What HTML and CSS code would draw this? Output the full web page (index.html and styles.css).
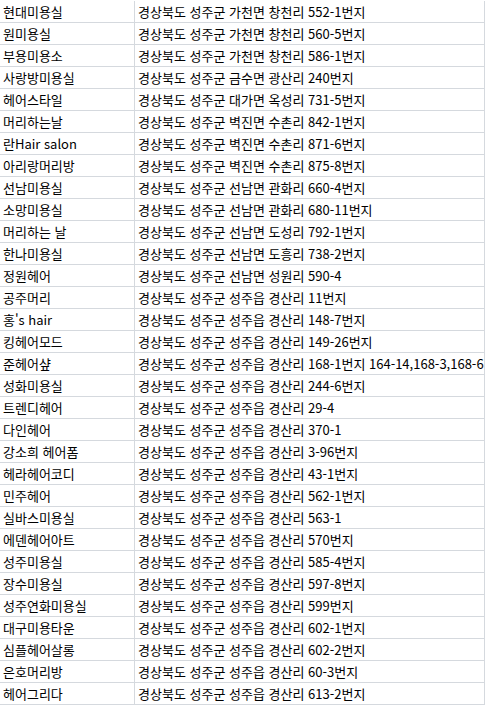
FILE: index.html
```html
<!DOCTYPE html>
<html lang="ko">
<head>
<meta charset="utf-8">
<title>미용실 목록</title>
<link rel="stylesheet" href="styles.css">
</head>
<body>
<div class="sheet">
  <div class="row"><div class="cell name">현대미용실</div><div class="cell addr">경상북도 성주군 가천면 창천리 552-1번지</div></div>
  <div class="row"><div class="cell name">원미용실</div><div class="cell addr">경상북도 성주군 가천면 창천리 560-5번지</div></div>
  <div class="row"><div class="cell name">부용미용소</div><div class="cell addr">경상북도 성주군 가천면 창천리 586-1번지</div></div>
  <div class="row"><div class="cell name">사랑방미용실</div><div class="cell addr">경상북도 성주군 금수면 광산리 240번지</div></div>
  <div class="row"><div class="cell name">헤어스타일</div><div class="cell addr">경상북도 성주군 대가면 옥성리 731-5번지</div></div>
  <div class="row"><div class="cell name">머리하는날</div><div class="cell addr">경상북도 성주군 벽진면 수촌리 842-1번지</div></div>
  <div class="row"><div class="cell name">란Hair salon</div><div class="cell addr">경상북도 성주군 벽진면 수촌리 871-6번지</div></div>
  <div class="row"><div class="cell name">아리랑머리방</div><div class="cell addr">경상북도 성주군 벽진면 수촌리 875-8번지</div></div>
  <div class="row"><div class="cell name">선남미용실</div><div class="cell addr">경상북도 성주군 선남면 관화리 660-4번지</div></div>
  <div class="row"><div class="cell name">소망미용실</div><div class="cell addr">경상북도 성주군 선남면 관화리 680-11번지</div></div>
  <div class="row"><div class="cell name">머리하는 날</div><div class="cell addr">경상북도 성주군 선남면 도성리 792-1번지</div></div>
  <div class="row"><div class="cell name">한나미용실</div><div class="cell addr">경상북도 성주군 선남면 도흥리 738-2번지</div></div>
  <div class="row"><div class="cell name">정원헤어</div><div class="cell addr">경상북도 성주군 선남면 성원리 590-4</div></div>
  <div class="row"><div class="cell name">공주머리</div><div class="cell addr">경상북도 성주군 성주읍 경산리 11번지</div></div>
  <div class="row"><div class="cell name">홍's hair</div><div class="cell addr">경상북도 성주군 성주읍 경산리 148-7번지</div></div>
  <div class="row"><div class="cell name">킹헤어모드</div><div class="cell addr">경상북도 성주군 성주읍 경산리 149-26번지</div></div>
  <div class="row"><div class="cell name">준헤어샾</div><div class="cell addr">경상북도 성주군 성주읍 경산리 168-1번지 164-14,168-3,168-6</div></div>
  <div class="row"><div class="cell name">성화미용실</div><div class="cell addr">경상북도 성주군 성주읍 경산리 244-6번지</div></div>
  <div class="row"><div class="cell name">트렌디헤어</div><div class="cell addr">경상북도 성주군 성주읍 경산리 29-4</div></div>
  <div class="row"><div class="cell name">다인헤어</div><div class="cell addr">경상북도 성주군 성주읍 경산리 370-1</div></div>
  <div class="row"><div class="cell name">강소희 헤어폼</div><div class="cell addr">경상북도 성주군 성주읍 경산리 3-96번지</div></div>
  <div class="row"><div class="cell name">헤라헤어코디</div><div class="cell addr">경상북도 성주군 성주읍 경산리 43-1번지</div></div>
  <div class="row"><div class="cell name">민주헤어</div><div class="cell addr">경상북도 성주군 성주읍 경산리 562-1번지</div></div>
  <div class="row"><div class="cell name">실바스미용실</div><div class="cell addr">경상북도 성주군 성주읍 경산리 563-1</div></div>
  <div class="row"><div class="cell name">에덴헤어아트</div><div class="cell addr">경상북도 성주군 성주읍 경산리 570번지</div></div>
  <div class="row"><div class="cell name">성주미용실</div><div class="cell addr">경상북도 성주군 성주읍 경산리 585-4번지</div></div>
  <div class="row"><div class="cell name">장수미용실</div><div class="cell addr">경상북도 성주군 성주읍 경산리 597-8번지</div></div>
  <div class="row"><div class="cell name">성주연화미용실</div><div class="cell addr">경상북도 성주군 성주읍 경산리 599번지</div></div>
  <div class="row"><div class="cell name">대구미용타운</div><div class="cell addr">경상북도 성주군 성주읍 경산리 602-1번지</div></div>
  <div class="row"><div class="cell name">심플헤어살롱</div><div class="cell addr">경상북도 성주군 성주읍 경산리 602-2번지</div></div>
  <div class="row"><div class="cell name">은호머리방</div><div class="cell addr">경상북도 성주군 성주읍 경산리 60-3번지</div></div>
  <div class="row"><div class="cell name">헤어그리다</div><div class="cell addr">경상북도 성주군 성주읍 경산리 613-2번지</div></div>
</div>
</body>
</html>
```

FILE: styles.css
```css
html, body {
  margin: 0;
  padding: 0;
  background: #ffffff;
}

body {
  font-family: "Noto Sans CJK KR", "Noto Sans", sans-serif;
  font-size: 13px;
  color: #000000;
}

.sheet {
  padding-top: 1px;
  width: 485px;
}

.row {
  display: grid;
  grid-template-columns: 135px 350px;
  height: 22px;
}

.cell {
  box-sizing: border-box;
  height: 22px;
  border-right: 1px solid #d5d9de;
  border-bottom: 1px solid #d5d9de;
  padding: 0 0 0 3px;
  line-height: 21px;
  white-space: nowrap;
  overflow: hidden;
}

.addr {
  padding-left: 3px;
}
```
